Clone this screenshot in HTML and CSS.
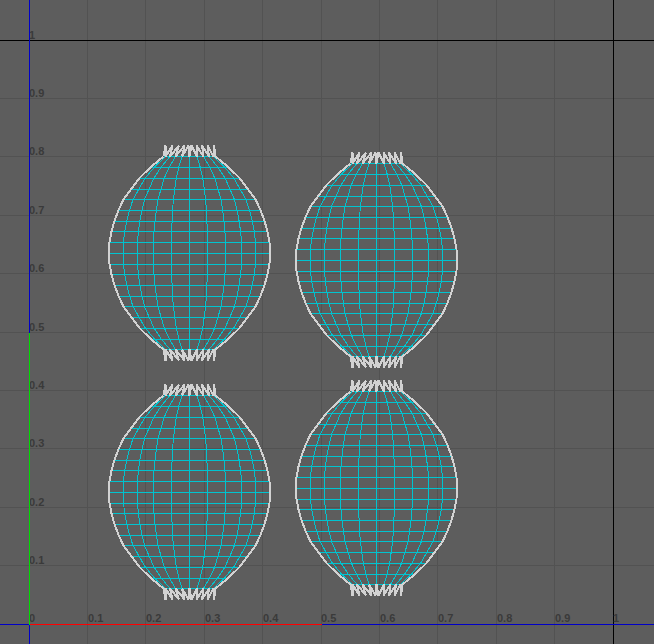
FILE: index.html
```html
<!DOCTYPE html>
<html lang="en">
<head>
<meta charset="utf-8">
<title>UV Editor</title>
<link rel="stylesheet" href="styles.css">
</head>
<body>
<svg class="viewport" role="img" aria-label="UV layout">
  <g id="grid"></g>
  <g id="shells"></g>
</svg>
<script src="uv.js"></script>
</body>
</html>
```
FILE: styles.css
```css
body {
  margin: 0;
  background: #5d5d5d;
}

.viewport {
  display: block;
  width: 100%;
  height: 100vh;
  shape-rendering: crispEdges;
}

.viewport path {
  fill: none;
  stroke-width: 1px;
}

.viewport text {
  font: bold 11px "Liberation Sans", Arial, sans-serif;
  fill: #3a3a3a;
}

.viewport .grid { stroke: #525252; }
.viewport .unit { stroke: #000000; }
.viewport .axis { stroke: #0000c8; }
.viewport .axis-u { stroke: #ff0000; }
.viewport .axis-v { stroke: #00dc00; }
.viewport .edge { stroke: #00c4d0; }

.viewport .border {
  stroke: #d2d2d2;
  stroke-width: 2px;
  stroke-linejoin: bevel;
}
```
FILE: uv.js
```js
const NS = "http://www.w3.org/2000/svg";
const EXTENT = 4000;
const ORIGIN = { x: 29, y: 624 };
const UNIT = 584;

function path(parent, cls, d) {
  const el = document.createElementNS(NS, "path");
  el.setAttribute("class", cls);
  el.setAttribute("d", d);
  parent.appendChild(el);
}

function label(parent, x, y, value) {
  const el = document.createElementNS(NS, "text");
  el.setAttribute("x", x);
  el.setAttribute("y", y);
  el.textContent = value;
  parent.appendChild(el);
}

const px = (v) => Math.floor(v) + 0.5;
const gridX = (i) => px(ORIGIN.x + (i * UNIT) / 10);
const gridY = (i) => px(ORIGIN.y - (i * UNIT) / 10);
const name = (i) => String(i / 10);

function drawGrid(g) {
  let lines = "";
  for (let i = -2; i <= 30; i++) lines += `M${gridX(i)} 0V${EXTENT}`;
  for (let i = -30; i <= 12; i++) lines += `M0 ${gridY(i)}H${EXTENT}`;
  path(g, "grid", lines);
  path(g, "unit", `M0 ${gridY(10)}H${EXTENT}M${gridX(10)} 0V${EXTENT}`);
  for (let i = 0; i <= 10; i++) {
    label(g, Math.ceil(ORIGIN.x + (i * UNIT) / 10), 622, name(i));
  }
  for (let i = 1; i <= 10; i++) label(g, 29, Math.floor(gridY(i)) - 1, name(i));
  path(g, "axis", `M0 ${gridY(0)}H${EXTENT}M${gridX(0)} 0V${EXTENT}`);
  path(g, "axis-u", `M${gridX(0)} ${gridY(0)}H${gridX(5)}`);
  path(g, "axis-v", `M${gridX(0)} ${gridY(0)}V${gridY(5)}`);
}

// Half widths of the shell from the neck to the middle row.
const PROFILE = [26, 39, 50, 58, 66, 71, 75, 78, 80, 80.5];
const NECK = [7.5, 14, 19.5, 24];
const BELLY = [18, 36, 52, 66];
const ROWS = 18;
const STEP = 193 / ROWS;
const BASES = [-26, -24, -19.5, -14, -7.5, 0, 7.5, 14, 19.5, 24, 26];
const TIPS = [-24, -17, -10.5, -5, -1, 2, 7, 12.5, 18, 24.5];

function halfWidth(row) {
  return PROFILE[row <= 9 ? row : ROWS - row];
}

function meridian(cx, top, k, side) {
  const points = [];
  for (let r = 0; r <= ROWS; r++) {
    const fromMiddle = Math.abs(9 - r) / 9;
    const t = fromMiddle * fromMiddle;
    const share = (NECK[k] / 26) * t + (BELLY[k] / 80) * (1 - t);
    points.push(`${cx + side * share * halfWidth(r)} ${top + r * STEP}`);
  }
  return "M" + points.join("L");
}

function outline(cx, top, side) {
  const points = [];
  for (let r = 0; r <= ROWS; r++) {
    points.push(`${cx + side * halfWidth(r)} ${top + r * STEP}`);
  }
  return "M" + points.join("L");
}

function fringe(cx, y, height) {
  let d = `M${cx + BASES[0]} ${y}`;
  TIPS.forEach((tip, i) => {
    d += `L${cx + tip} ${y + height}L${cx + BASES[i + 1]} ${y}`;
  });
  return d;
}

function drawShell(g, cx, top) {
  let edges = `M${cx} ${top}V${top + 193}`;
  for (let r = 0; r <= ROWS; r++) {
    const y = px(top + r * STEP + 0.35);
    edges += `M${cx - halfWidth(r)} ${y}H${cx + halfWidth(r)}`;
  }
  for (let k = 0; k < 4; k++) {
    edges += meridian(cx, top, k, -1) + meridian(cx, top, k, 1);
  }
  path(g, "edge", edges);
  path(g, "border", outline(cx, top, -1) + outline(cx, top, 1));
  path(g, "border", fringe(cx, top, -11) + fringe(cx, top + 193, 11));
}

drawGrid(document.getElementById("grid"));
const shells = document.getElementById("shells");
[[189.5, 156.5], [376.5, 163.5], [189.5, 395.5], [376.5, 391.5]].forEach(
  ([cx, top]) => drawShell(shells, cx, top)
);
```
